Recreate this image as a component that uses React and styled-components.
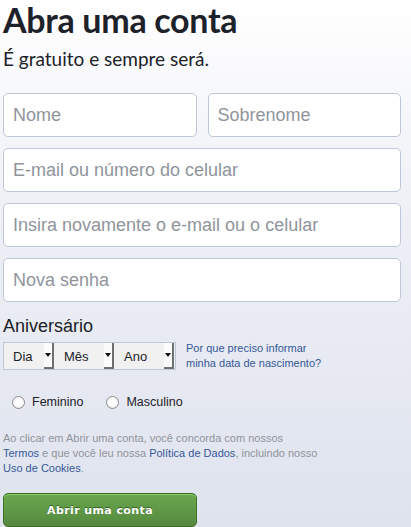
import styled, { createGlobalStyle } from "styled-components";

const GlobalStyle = createGlobalStyle`
  html, body {
    margin: 0;
    padding: 0;
  }
  body {
    width: 411px;
    height: 527px;
    overflow: hidden;
    background: linear-gradient(#ffffff 0%, #eef0f6 40%, #dfe3ee 100%);
    font-family: "Liberation Sans", Arial, sans-serif;
  }
`;

const Page = styled.div`
  padding: 0 10px 0 3px;
  display: flex;
  flex-direction: column;
`;

const Heading = styled.h1`
  margin: 0;
  font-family: Lato, "Open Sans", sans-serif;
  font-weight: 700;
  font-size: 34px;
  line-height: 40px;
  letter-spacing: -0.3px;
  color: #1d2129;
`;

const Subtitle = styled.p`
  margin: 7px 0 0;
  font-family: Lato, "Open Sans", sans-serif;
  font-size: 19px;
  line-height: 24px;
  color: #1d2129;
`;

const Fields = styled.div`
  margin-top: 22px;
  display: grid;
  grid-template-columns: 1fr 1fr;
  column-gap: 11px;
  row-gap: 11px;
`;

const TextInput = styled.input`
  grid-column: ${({ $wide }) => ($wide ? "1 / span 2" : "auto")};
  box-sizing: border-box;
  width: 100%;
  height: 44px;
  margin: 0;
  padding: 0 9px;
  border: 1px solid #bdc7d8;
  border-radius: 5px;
  background: #fff;
  font-family: "Liberation Sans", Arial, sans-serif;
  font-size: 18px;
  color: #1d2129;
  outline: none;

  &::placeholder {
    color: #90949c;
  }
`;

const Label = styled.div`
  margin-top: 13px;
  font-size: 18px;
  line-height: 22px;
  color: #1d2129;
`;

const BirthRow = styled.div`
  margin-top: 4px;
  display: flex;
  align-items: center;
`;

const Selects = styled.div`
  display: flex;
  border: 1px solid #bdc7d8;
`;

const SelectBox = styled.div`
  width: ${({ $w }) => $w}px;
  height: 26px;
  display: flex;
  align-items: stretch;
  background: #f1f1f1;
  font-size: 13px;
  color: #1d2129;
`;

const SelectText = styled.span`
  flex: 1;
  display: flex;
  align-items: center;
  padding-left: ${({ $pad }) => $pad}px;
`;

const Arrow = styled.span`
  width: 10px;
  margin: 0 1px 0 0;
  display: flex;
  align-items: center;
  justify-content: center;
  background: #fbfbfb;
  border-right: 2px solid #6f6f6f;
  border-bottom: 2px solid #6f6f6f;
  box-sizing: border-box;

  &::after {
    content: "";
    border-left: 3px solid transparent;
    border-right: 3px solid transparent;
    border-top: 4px solid #111;
  }
`;

const HelpLink = styled.a`
  margin-left: 10px;
  font-size: 11px;
  line-height: 15px;
  color: #365899;
  text-decoration: none;
`;

const GenderRow = styled.div`
  margin-top: 24px;
  padding-left: 9px;
  display: flex;
  gap: 23px;
`;

const RadioLabel = styled.label`
  display: flex;
  align-items: center;
  gap: 7px;
  font-size: 12.5px;
  color: #1d2129;
`;

const Radio = styled.span`
  width: 11px;
  height: 11px;
  border-radius: 50%;
  border: 1px solid #8a8a8a;
  background: radial-gradient(circle at 50% 35%, #ffffff 40%, #e4e4e4 100%);
`;

const Terms = styled.p`
  margin: 22px 0 0;
  font-size: 11px;
  line-height: 15px;
  color: #90949c;
`;

const TermsLink = styled.a`
  color: #365899;
  text-decoration: none;
`;

const SubmitButton = styled.button`
  margin-top: 17px;
  width: 194px;
  height: 34px;
  border: 1px solid #3b6e22;
  border-radius: 5px;
  background: linear-gradient(#69a74e, #55893f);
  box-shadow: inset 0 1px 1px #8fce74;
  font-family: "DejaVu Sans", sans-serif;
  font-weight: 700;
  font-size: 11px;
  letter-spacing: 0.4px;
  color: #fff;
  text-shadow: 0 -1px 0 #355f1f;
  cursor: pointer;
`;

export default function App() {
  return (
    <>
      <GlobalStyle />
      <Page>
        <Heading>Abra uma conta</Heading>
        <Subtitle>É gratuito e sempre será.</Subtitle>
        <Fields>
          <TextInput placeholder="Nome" />
          <TextInput placeholder="Sobrenome" />
          <TextInput $wide placeholder="E-mail ou número do celular" />
          <TextInput $wide placeholder="Insira novamente o e-mail ou o celular" />
          <TextInput $wide type="password" placeholder="Nova senha" />
        </Fields>
        <Label>Aniversário</Label>
        <BirthRow>
          <Selects>
            <SelectBox $w={51}>
              <SelectText $pad={9}>Dia</SelectText>
              <Arrow />
            </SelectBox>
            <SelectBox $w={60}>
              <SelectText $pad={9}>Mês</SelectText>
              <Arrow />
            </SelectBox>
            <SelectBox $w={60}>
              <SelectText $pad={9}>Ano</SelectText>
              <Arrow />
            </SelectBox>
          </Selects>
          <HelpLink href="#">
            Por que preciso informar
            <br />
            minha data de nascimento?
          </HelpLink>
        </BirthRow>
        <GenderRow>
          <RadioLabel>
            <Radio />
            Feminino
          </RadioLabel>
          <RadioLabel>
            <Radio />
            Masculino
          </RadioLabel>
        </GenderRow>
        <Terms>
          Ao clicar em Abrir uma conta, você concorda com nossos
          <br />
          <TermsLink href="#">Termos</TermsLink> e que você leu nossa{" "}
          <TermsLink href="#">Política de Dados</TermsLink>, incluindo nosso
          <br />
          <TermsLink href="#">Uso de Cookies</TermsLink>.
        </Terms>
        <div>
          <SubmitButton>Abrir uma conta</SubmitButton>
        </div>
      </Page>
    </>
  );
}
